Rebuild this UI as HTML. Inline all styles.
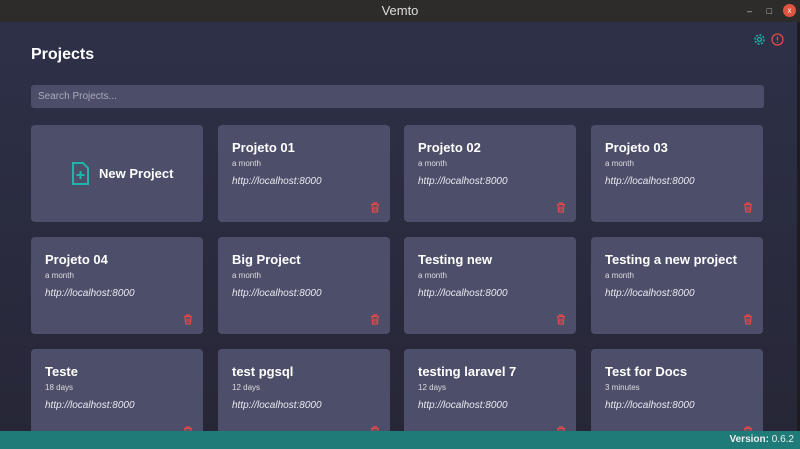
<!DOCTYPE html><html><head><style>
*{margin:0;padding:0;box-sizing:border-box}
body{width:800px;height:449px;overflow:hidden;font-family:"Liberation Sans",sans-serif;background:linear-gradient(#2e3149,#262636);position:relative;color:#fff}
.tb{position:absolute;top:0;left:0;width:800px;height:22px;background:#2d2c2a;color:#ddd;font-size:13px;text-align:center;line-height:22px}
.tb .c{position:absolute;right:4px;top:4px;width:13px;height:13px;border-radius:50%;background:#e0533f;color:#fff;font-size:8px;line-height:13px}
.tb .m{position:absolute;top:0;font-size:9px;color:#ccc}
h1{position:absolute;left:31px;top:46px;font-size:16px;font-weight:bold}
.s{position:absolute;left:31px;top:85px;width:733px;height:23px;background:#4c4e69;border-radius:3px;font-size:10px;color:#a9aabb;padding:6px 7px}
.card{position:absolute;width:172px;height:97px;background:#4d4f6a;border-radius:4px}
.card b{position:absolute;left:14px;top:15px;font-size:13px}
.card .d{position:absolute;left:14px;top:34px;font-size:8px;color:#ddd}
.card i{position:absolute;left:14px;top:51px;font-size:10px;color:#e8e8f0}
.card svg.t{position:absolute;left:152px;top:77px}
.ft{position:absolute;left:0;top:431px;width:800px;height:18px;background:#1f7b78;font-size:10px;text-align:right;padding:3px 6px;color:#eee}
.sb{position:absolute;right:0;top:22px;width:3px;height:409px;background:#1c1c22}
</style></head><body>
<div class="tb">Vemto<span class="m" style="right:48px">–</span><span class="m" style="right:28px">□</span><span class="c">x</span></div>
<div class="sb"></div>
<svg style="position:absolute;left:753px;top:33px" width="13" height="13" viewBox="0 0 13 13"><circle cx="6.5" cy="6.5" r="4.5" fill="none" stroke="#1fb5a8" stroke-width="1.5" stroke-dasharray="2 1.5"/><circle cx="6.5" cy="6.5" r="2" fill="none" stroke="#1fb5a8" stroke-width="1.3"/></svg>
<svg style="position:absolute;left:771px;top:33px" width="13" height="13" viewBox="0 0 13 13"><circle cx="6.5" cy="6.5" r="5.5" fill="none" stroke="#e0494a" stroke-width="1.3"/><path d="M6.5 3.5v4M6.5 9v1" stroke="#e0494a" stroke-width="1.4"/></svg>
<h1>Projects</h1>
<div class="s">Search Projects...</div>
<div class="card" style="left:31px;top:125px"><svg style="position:absolute;left:40px;top:37px" width="19" height="24" viewBox="0 0 19 24"><path d="M2 1h10l5 5v16H2z" fill="none" stroke="#1fb5a8" stroke-width="2"/><path d="M9.5 9v8M5.5 13h8" stroke="#1fb5a8" stroke-width="2"/></svg><b style="left:68px;top:41px">New Project</b></div>
<div id="cards"></div>
<script>
var d=[["Projeto 01","a month",1,0],["Projeto 02","a month",2,0],["Projeto 03","a month",3,0],["Projeto 04","a month",0,1],["Big Project","a month",1,1],["Testing new","a month",2,1],["Testing a new project","a month",3,1],["Teste","18 days",0,2],["test pgsql","12 days",1,2],["testing laravel 7","12 days",2,2],["Test for Docs","3 minutes",3,2]];
var xs=[31,218,404,591],ys=[125,237,349],h="";
d.forEach(function(c){h+='<div class="card" style="left:'+xs[c[2]]+'px;top:'+ys[c[3]]+'px"><b>'+c[0]+'</b><div class="d">'+c[1]+'</div><i>http://localhost:8000</i><svg class="t" width="10" height="11" viewBox="0 0 10 11"><path d="M1 2.5h8M3.5 2.5V1h3v1.5M2 2.5l.7 7.5h4.6l.7-7.5M4 4.5v4M6 4.5v4" fill="none" stroke="#e0494a" stroke-width="1.2"/></svg></div>'});
document.getElementById("cards").innerHTML=h;
</script>
<div class="ft"><b>Version:</b> 0.6.2</div>
</body></html>
